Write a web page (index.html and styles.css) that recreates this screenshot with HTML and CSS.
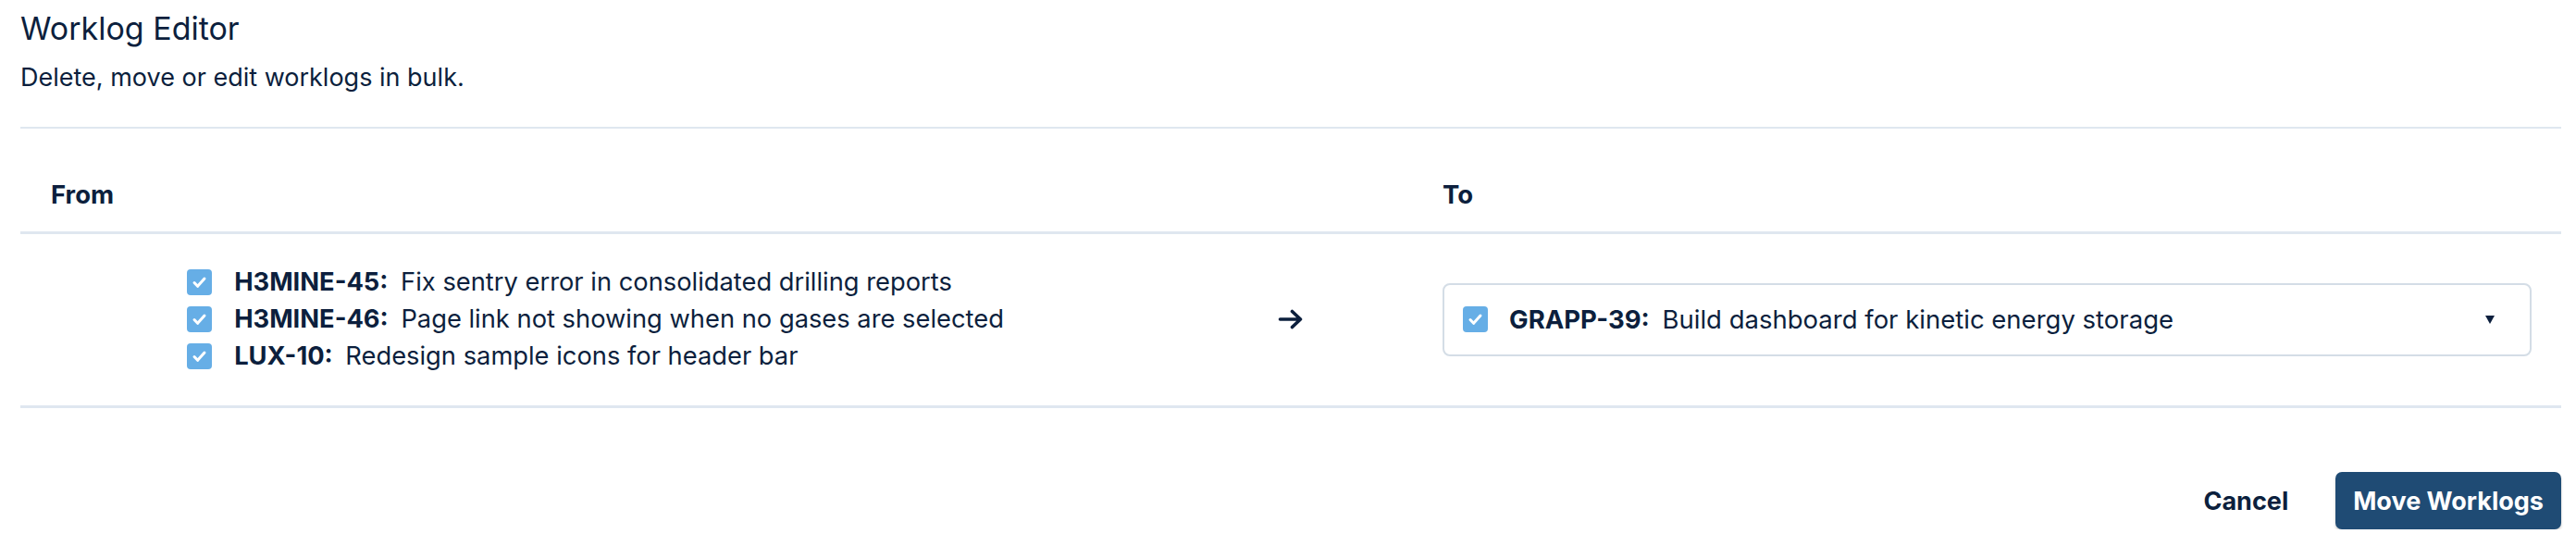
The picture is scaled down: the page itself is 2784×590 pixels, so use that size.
FILE: index.html
```html
<!DOCTYPE html>
<html lang="en">
<head>
    <meta charset="UTF-8">
    <meta name="viewport" content="width=device-width, initial-scale=1.0">
    <title>Worklog Editor</title>
    <link rel="stylesheet" href="styles.css">
</head>
<body>
    <div class="editor">
        <header class="editor-head">
            <h1>Worklog Editor</h1>
            <p>Delete, move or edit worklogs in bulk.</p>
        </header>

        <!-- Move table -->
        <div class="move-table">
            <div class="move-row move-head">
                <div class="cell">From</div>
                <div class="cell"></div>
                <div class="cell">To</div>
            </div>
            <div class="move-row move-body">
                <div class="cell from-cell">
                    <ul class="issue-list">
                        <li class="issue">
                            <span class="check"><svg viewBox="0 0 27 28" width="27" height="28"><path d="M8 14.5l3.6 3.8L19 10" /></svg></span>
                            <span class="issue-text"><b>H3MINE-45:</b> Fix sentry error in consolidated drilling reports</span>
                        </li>
                        <li class="issue">
                            <span class="check"><svg viewBox="0 0 27 28" width="27" height="28"><path d="M8 14.5l3.6 3.8L19 10" /></svg></span>
                            <span class="issue-text"><b>H3MINE-46:</b> Page link not showing when no gases are selected</span>
                        </li>
                        <li class="issue">
                            <span class="check"><svg viewBox="0 0 27 28" width="27" height="28"><path d="M8 14.5l3.6 3.8L19 10" /></svg></span>
                            <span class="issue-text"><b>LUX-10:</b> Redesign sample icons for header bar</span>
                        </li>
                    </ul>
                </div>
                <div class="cell arrow-cell">
                    <svg class="arrow" viewBox="0 0 28 22" width="28" height="22">
                        <path d="M2.5 11h22M15.5 2.5l9 8.5-9 8.5" />
                    </svg>
                </div>
                <div class="cell to-cell">
                    <div class="issue-select">
                        <span class="check"><svg viewBox="0 0 27 28" width="27" height="28"><path d="M8 14.5l3.6 3.8L19 10" /></svg></span>
                        <span class="issue-text"><b>GRAPP-39:</b> Build dashboard for kinetic energy storage</span>
                        <span class="caret"></span>
                    </div>
                </div>
            </div>
        </div>

        <footer class="editor-actions">
            <button type="button" class="btn-cancel">Cancel</button>
            <button type="button" class="btn-primary">Move Worklogs</button>
        </footer>
    </div>
</body>
</html>
```

FILE: styles.css
```css
body {
    font-family: Inter, "Noto Sans", sans-serif;
    margin: 0;
    padding: 0;
    background-color: #fff;
    color: #0c1f3d;
}
.editor {
    padding: 0 16px 0 22px;
}
.editor-head {
    padding-top: 9px;
    padding-bottom: 37px;
    border-bottom: 2px solid #dfe7f0;
}
.editor-head h1 {
    margin: 0;
    font-size: 34px;
    font-weight: 400;
    line-height: 44px;
}
.editor-head p {
    margin: 15px 0 0;
    font-size: 27px;
    line-height: 32px;
}
.move-row {
    display: grid;
    grid-template-columns: 1fr 262px 1fr;
    border-bottom: 3px solid #dfe7f0;
}
.cell {
    padding: 0 32px 0 33px;
    font-size: 27.5px;
    line-height: 1.2;
}
.move-head .cell {
    padding-top: 55px;
    padding-bottom: 23px;
    font-weight: 700;
}
.move-body {
    padding: 32px 0 33px;
    align-items: center;
}
.from-cell {
    display: flex;
    justify-content: center;
    font-size: 27.3px;
}
.issue-list {
    list-style: none;
    margin: 0;
    padding: 0;
}
.issue {
    display: flex;
    align-items: center;
    height: 40px;
}
.issue-text {
    white-space: nowrap;
}
.issue-text b {
    margin-right: 6px;
}
.check {
    display: inline-block;
    width: 27px;
    height: 28px;
    margin-right: 24px;
    border-radius: 4px;
    background-color: #66aee6;
    flex-shrink: 0;
}
.check svg {
    display: block;
}
.check path {
    fill: none;
    stroke: #fff;
    stroke-width: 3;
    stroke-linecap: round;
    stroke-linejoin: round;
}
.arrow-cell {
    display: flex;
    justify-content: center;
    padding: 0;
}
.arrow path {
    fill: none;
    stroke: #0c1f3d;
    stroke-width: 3.6;
    stroke-linecap: round;
    stroke-linejoin: round;
}
.issue-select {
    display: flex;
    align-items: center;
    height: 79px;
    box-sizing: border-box;
    padding: 0 38px 0 20px;
    border: 2px solid #d4dde6;
    border-radius: 8px;
}
.issue-select .check {
    margin-right: 23px;
}
.issue-select .issue-text {
    flex: 1;
}
.caret {
    width: 0;
    height: 0;
    border-left: 5.5px solid transparent;
    border-right: 5.5px solid transparent;
    border-top: 9px solid #0c1f3d;
}
.editor-actions {
    display: flex;
    justify-content: flex-end;
    align-items: center;
    gap: 31px;
    padding-top: 69px;
}
.btn-cancel,
.btn-primary {
    font-family: Inter, "Noto Sans", sans-serif;
    font-size: 27px;
    font-weight: 700;
    border: none;
    cursor: pointer;
}
.btn-cancel {
    background: none;
    color: #0c1f3d;
    padding: 0 20px;
}
.btn-primary {
    height: 62px;
    padding: 0 19px;
    color: #fff;
    background-color: #1f4b74;
    border-radius: 7px;
    box-shadow: 0 2px 3px rgba(0, 0, 0, 0.2);
}
```
